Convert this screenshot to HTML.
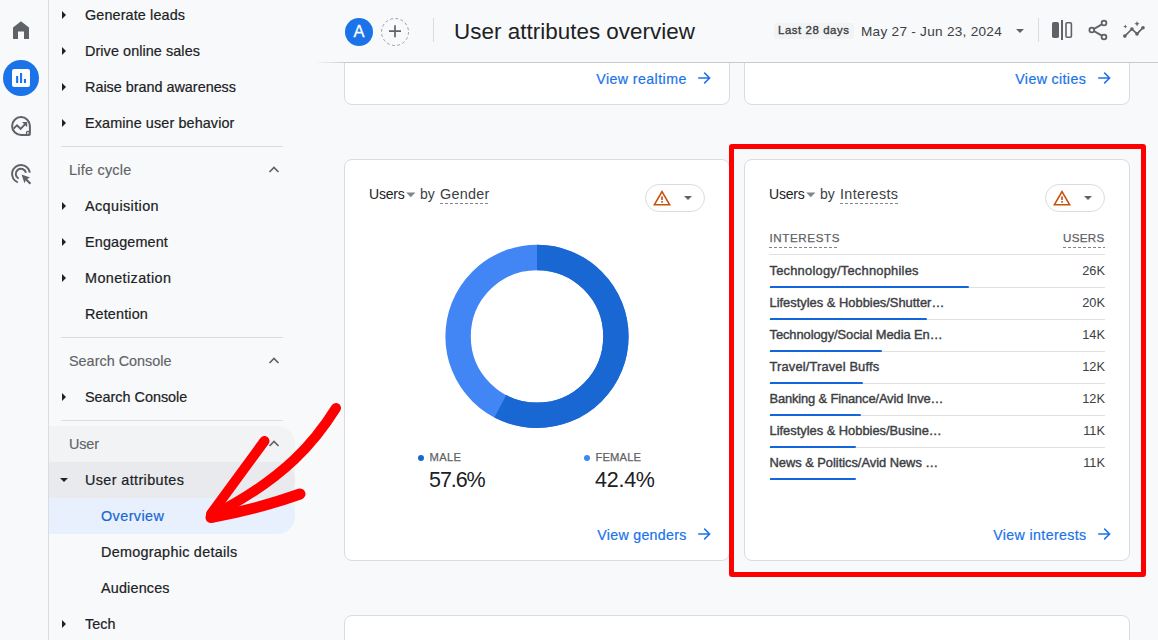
<!DOCTYPE html>
<html lang="en">
<head>
<meta charset="utf-8">
<title>User attributes overview</title>
<style>
*{box-sizing:border-box;margin:0;padding:0}
html,body{width:1158px;height:640px;overflow:hidden;background:#f8f9fa;font-family:"Liberation Sans",sans-serif;color:#202124}
#app{position:relative;width:1158px;height:640px;overflow:hidden;background:#f8f9fa}
.abs{position:absolute}
.t{position:absolute;white-space:nowrap;line-height:1}
/* rail */
#rail{position:absolute;left:0;top:0;width:49px;height:640px;background:#f8f9fa;border-right:1px solid #dadce0}
/* nav */
.nav{font-size:14.4px;color:#202124;height:20px;line-height:20px;-webkit-text-stroke:0.2px}
.sec{font-size:14.4px;color:#5f6368;height:20px;line-height:20px;-webkit-text-stroke:0.15px}
.tri{position:absolute;width:0;height:0;border-top:4px solid transparent;border-bottom:4px solid transparent;border-left:4px solid #202124}
.trid{position:absolute;width:0;height:0;border-left:4px solid transparent;border-right:4px solid transparent;border-top:4px solid #202124}
.hr{position:absolute;height:1px;background:#dadce0;left:61px;width:222px}
/* cards */
.card{position:absolute;background:#fff;border:1px solid #dadce0;border-radius:8px}
.link{font-size:14.2px;color:#1a73e8;-webkit-text-stroke:0.2px #1a73e8}
.row{position:absolute;left:769px;width:336px;height:1px;background:#e0e0e0}
.bar{position:absolute;left:770px;height:2px;background:#1366e0;border-radius:0 1px 1px 0}
.rl{font-size:12.9px;color:#3c4043;-webkit-text-stroke:0.4px #3c4043;left:769.5px;margin-top:0.6px}
.rv{font-size:12.8px;color:#3c4043;right:53px;text-align:right;margin-top:0.6px}
</style>
</head>
<body>
<div id="app">

<!-- sidebar -->
<div class="abs" style="left:49px;top:426px;width:246px;height:108px;background:#f1f3f4;border-radius:0 18px 18px 0"></div>
<div class="abs" style="left:49px;top:462px;width:246px;height:36px;background:#e8eaed;border-radius:0 18px 18px 0"></div>
<div class="abs" style="left:49px;top:498px;width:246px;height:36px;background:#e8f0fe;border-radius:0 18px 18px 0"></div>
<div class="t nav" id="n0" style="left:85px;top:5px;letter-spacing:0.121px">Generate leads</div>
<div class="tri" style="left:62px;top:11px"></div>
<div class="t nav" id="n1" style="left:85px;top:41px;letter-spacing:0.078px">Drive online sales</div>
<div class="tri" style="left:62px;top:47px"></div>
<div class="t nav" id="n2" style="left:85px;top:77px;letter-spacing:-0.009px">Raise brand awareness</div>
<div class="tri" style="left:62px;top:83px"></div>
<div class="t nav" id="n3" style="left:85px;top:113px;letter-spacing:0.110px">Examine user behavior</div>
<div class="tri" style="left:62px;top:119px"></div>
<div class="t sec" id="n4" style="left:69px;top:160px;letter-spacing:0.250px">Life cycle</div>
<svg class="abs" style="left:267px;top:165px" width="14" height="9" viewBox="0 0 14 9"><path d="M2.5 7 L7 2.5 L11.5 7" fill="none" stroke="#5f6368" stroke-width="1.7"/></svg>
<div class="t nav" id="n5" style="left:85px;top:196px;letter-spacing:0.401px">Acquisition</div>
<div class="tri" style="left:62px;top:202px"></div>
<div class="t nav" id="n6" style="left:85px;top:232px;letter-spacing:0.139px">Engagement</div>
<div class="tri" style="left:62px;top:238px"></div>
<div class="t nav" id="n7" style="left:85px;top:268px;letter-spacing:0.399px">Monetization</div>
<div class="tri" style="left:62px;top:274px"></div>
<div class="t nav" id="n8" style="left:85px;top:304px;letter-spacing:0.155px">Retention</div>
<div class="t sec" id="n9" style="left:69px;top:351px;letter-spacing:0.007px">Search Console</div>
<svg class="abs" style="left:267px;top:356px" width="14" height="9" viewBox="0 0 14 9"><path d="M2.5 7 L7 2.5 L11.5 7" fill="none" stroke="#5f6368" stroke-width="1.7"/></svg>
<div class="t nav" id="n10" style="left:85px;top:387px;letter-spacing:-0.008px">Search Console</div>
<div class="tri" style="left:62px;top:393px"></div>
<div class="t sec" id="n11" style="left:69px;top:434px;letter-spacing:-0.148px">User</div>
<svg class="abs" style="left:267px;top:439px" width="14" height="9" viewBox="0 0 14 9"><path d="M2.5 7 L7 2.5 L11.5 7" fill="none" stroke="#5f6368" stroke-width="1.7"/></svg>
<div class="t nav" id="n12" style="left:85px;top:470px;letter-spacing:0.381px">User attributes</div>
<div class="trid" style="left:60px;top:478px"></div>
<div class="t nav" id="n13" style="left:101px;top:506px;color:#1967d2;letter-spacing:0.414px">Overview</div>
<div class="t nav" id="n14" style="left:101px;top:542px;letter-spacing:0.274px">Demographic details</div>
<div class="t nav" id="n15" style="left:101px;top:578px;letter-spacing:0.165px">Audiences</div>
<div class="t nav" id="n16" style="left:85px;top:614px;letter-spacing:0.023px">Tech</div>
<div class="tri" style="left:62px;top:620px"></div>
<div class="hr" style="top:146px"></div>
<div class="hr" style="top:337px"></div>
<div class="hr" style="top:420px"></div>
<div id="rail"></div>
<!-- rail icons -->
<svg class="abs" style="left:0;top:0" width="48" height="200" viewBox="0 0 48 200"><path d="M13 39 V27.4 L21 21.2 L29 27.4 V39 H24 V31.5 H18 V39 Z" fill="#5f6368"/><circle cx="21" cy="78" r="18" fill="#1a73e8"/><rect x="12" y="69" width="18" height="18" rx="2.2" fill="#fff"/><rect x="16.1" y="76" width="2.1" height="7" fill="#1a73e8"/><rect x="20" y="73" width="2.1" height="10" fill="#1a73e8"/><rect x="23.9" y="79" width="2.1" height="4" fill="#1a73e8"/><path d="M21 117.1 a8.9 8.9 0 1 0 0 17.8 h7.9 a1 1 0 0 0 1 -1 v-7.9 a8.9 8.9 0 0 0 -8.9 -8.9 z" fill="none" stroke="#5f6368" stroke-width="2"/><circle cx="27.9" cy="132.9" r="1.5" fill="#f8f9fa" stroke="#5f6368" stroke-width="1.3"/><path d="M13.6 128.6 L17 125.4 L20.6 128.8 L25.4 123.8" fill="none" stroke="#5f6368" stroke-width="1.9"/><path d="M22 122 H27.2 V127.2 Z" fill="#5f6368"/><path d="M17.8 182.4 A9 9 0 1 1 29.9 172.6" fill="none" stroke="#5f6368" stroke-width="2"/><path d="M18.6 178.6 A5.2 5.2 0 1 1 26 172.8" fill="none" stroke="#5f6368" stroke-width="2"/><path d="M21.6 174.4 L30 177.4 L27.2 178.9 L31.2 182.9 L29.7 184.4 L25.7 180.4 L24.4 183.2 Z" fill="#5f6368"/></svg>

<!-- main cards -->
<div class="card" style="left:344px;top:40px;width:386px;height:65px"></div>
<div class="card" style="left:744px;top:40px;width:386px;height:65px"></div>
<div class="card" style="left:344px;top:159px;width:386px;height:402px"></div>
<div class="card" style="left:744px;top:159px;width:386px;height:402px"></div>
<div class="card" style="left:344px;top:615px;width:786px;height:60px"></div>

<div class="t link" id="l1" style="left:596.3px;top:72px;letter-spacing:0.423px">View realtime</div>
<div class="t link" id="l2" style="left:1015.3px;top:72px;letter-spacing:0.367px">View cities</div>
<div class="t link" id="l3" style="left:597.2px;top:528px;letter-spacing:0.315px">View genders</div>
<div class="t link" id="l4" style="left:993.2px;top:528px;letter-spacing:0.381px">View interests</div>

<!-- card contents -->
<div class="t" id="gu" style="left:369px;top:187.3px;font-size:14px;color:#202124;letter-spacing:-0.212px">Users</div>
<svg class="abs" style="left:406.2px;top:191.6px" width="10" height="6" viewBox="0 0 10 6"><path d="M0.2 0.4 H9.4 L4.8 5.2 Z" fill="#80868b"/></svg>
<div class="t" id="gb" style="left:420px;top:187.3px;font-size:14px;color:#3c4043;letter-spacing:-0.048px">by</div>
<div class="t" id="gg" style="left:440px;top:187.3px;font-size:14.4px;color:#3c4043;height:17px;letter-spacing:0.283px">Gender</div>
<div class="abs" style="left:645px;top:184px;width:60px;height:28px;border:1px solid #dadce0;border-radius:14px;background:#fff"></div>
<svg class="abs" style="left:652px;top:189px" width="20" height="18" viewBox="0 0 20 18"><path d="M10 2.6 L17.6 15.7 H2.4 Z" fill="none" stroke="#c5500b" stroke-width="1.6" stroke-linejoin="miter"/><rect x="9.2" y="7.4" width="1.6" height="3.6" fill="#c5500b"/><rect x="9.2" y="12" width="1.6" height="1.7" fill="#c5500b"/></svg>
<div class="abs" style="left:684px;top:196px;width:0;height:0;border-left:4px solid transparent;border-right:4px solid transparent;border-top:4px solid #5f6368"></div>
<div class="t" id="iu" style="left:769px;top:187.3px;font-size:14px;color:#202124;letter-spacing:-0.212px">Users</div>
<svg class="abs" style="left:806.2px;top:191.6px" width="10" height="6" viewBox="0 0 10 6"><path d="M0.2 0.4 H9.4 L4.8 5.2 Z" fill="#80868b"/></svg>
<div class="t" id="ib" style="left:820px;top:187.3px;font-size:14px;color:#3c4043;letter-spacing:-0.048px">by</div>
<div class="t" id="ig" style="left:840px;top:187.3px;font-size:14.4px;color:#3c4043;height:17px;letter-spacing:0.355px">Interests</div>
<div class="abs" style="left:1045px;top:184px;width:60px;height:28px;border:1px solid #dadce0;border-radius:14px;background:#fff"></div>
<svg class="abs" style="left:1052px;top:189px" width="20" height="18" viewBox="0 0 20 18"><path d="M10 2.6 L17.6 15.7 H2.4 Z" fill="none" stroke="#c5500b" stroke-width="1.6" stroke-linejoin="miter"/><rect x="9.2" y="7.4" width="1.6" height="3.6" fill="#c5500b"/><rect x="9.2" y="12" width="1.6" height="1.7" fill="#c5500b"/></svg>
<div class="abs" style="left:1084px;top:196px;width:0;height:0;border-left:4px solid transparent;border-right:4px solid transparent;border-top:4px solid #5f6368"></div>
<svg class="abs" style="left:437px;top:236px" width="200" height="200" viewBox="437 236 200 200"><circle cx="537" cy="336.4" r="78.9" fill="none" stroke="#4285f4" stroke-width="25.39999999999999"/><circle cx="537" cy="336.4" r="78.9" fill="none" stroke="#1967d2" stroke-width="25.39999999999999" stroke-dasharray="285.55 495.74" transform="rotate(-90 537 336.4)"/></svg>
<div class="abs" style="left:418px;top:455px;width:6px;height:6px;border-radius:50%;background:#1967d2"></div>
<div class="t" id="lm" style="left:429.5px;top:452px;font-size:11.2px;color:#5f6368;-webkit-text-stroke:0.25px #5f6368;letter-spacing:0.358px">MALE</div>
<div class="t" id="lmv" style="left:429px;top:470px;font-size:21.5px;color:#202124;letter-spacing:-1.074px">57.6%</div>
<div class="abs" style="left:584px;top:455px;width:6px;height:6px;border-radius:50%;background:#4285f4"></div>
<div class="t" id="lf" style="left:595.5px;top:452px;font-size:11.2px;color:#5f6368;-webkit-text-stroke:0.25px #5f6368;letter-spacing:0.156px">FEMALE</div>
<div class="t" id="lfv" style="left:595px;top:470px;font-size:21.5px;color:#202124;letter-spacing:-0.254px">42.4%</div>
<div class="t" id="th1" style="left:769.5px;top:232px;font-size:11.6px;color:#5f6368;-webkit-text-stroke:0.25px #5f6368;height:16px;letter-spacing:0.604px">INTERESTS</div>
<div class="t" id="th2" style="left:1063px;top:232px;font-size:11.6px;color:#5f6368;-webkit-text-stroke:0.25px #5f6368;height:16px;letter-spacing:0.309px">USERS</div>
<div class="row" style="top:254px"></div>
<div class="t rl" id="r0" style="top:264px;letter-spacing:0.224px">Technology/Technophiles</div>
<div class="t rv" id="v0" style="top:264px">26K</div>
<div class="row" style="top:287px"></div>
<div class="bar" style="top:286px;width:199px"></div>
<div class="t rl" id="r1" style="top:296px;letter-spacing:-0.001px">Lifestyles &amp; Hobbies/Shutter…</div>
<div class="t rv" id="v1" style="top:296px">20K</div>
<div class="row" style="top:319px"></div>
<div class="bar" style="top:318px;width:157px"></div>
<div class="t rl" id="r2" style="top:328px;letter-spacing:-0.068px">Technology/Social Media En…</div>
<div class="t rv" id="v2" style="top:328px">14K</div>
<div class="row" style="top:351px"></div>
<div class="bar" style="top:350px;width:112px"></div>
<div class="t rl" id="r3" style="top:360px;letter-spacing:0.146px">Travel/Travel Buffs</div>
<div class="t rv" id="v3" style="top:360px">12K</div>
<div class="row" style="top:383px"></div>
<div class="bar" style="top:382px;width:93px"></div>
<div class="t rl" id="r4" style="top:392px;letter-spacing:-0.133px">Banking &amp; Finance/Avid Inve…</div>
<div class="t rv" id="v4" style="top:392px">12K</div>
<div class="row" style="top:415px"></div>
<div class="bar" style="top:414px;width:91px"></div>
<div class="t rl" id="r5" style="top:424px;letter-spacing:-0.016px">Lifestyles &amp; Hobbies/Busine…</div>
<div class="t rv" id="v5" style="top:424px">11K</div>
<div class="row" style="top:447px"></div>
<div class="bar" style="top:446px;width:86px"></div>
<div class="t rl" id="r6" style="top:456px;letter-spacing:-0.030px">News &amp; Politics/Avid News …</div>
<div class="t rv" id="v6" style="top:456px">11K</div>
<div class="bar" style="top:478px;width:86px"></div>
<svg class="abs" style="left:696.5px;top:71px" width="14" height="14" viewBox="0 0 14 14"><path d="M1.2 7 H12.2 M7.2 1.6 L12.6 7 L7.2 12.4" fill="none" stroke="#1a73e8" stroke-width="1.5"/></svg>
<svg class="abs" style="left:1096.5px;top:71px" width="14" height="14" viewBox="0 0 14 14"><path d="M1.2 7 H12.2 M7.2 1.6 L12.6 7 L7.2 12.4" fill="none" stroke="#1a73e8" stroke-width="1.5"/></svg>
<svg class="abs" style="left:696.5px;top:527px" width="14" height="14" viewBox="0 0 14 14"><path d="M1.2 7 H12.2 M7.2 1.6 L12.6 7 L7.2 12.4" fill="none" stroke="#1a73e8" stroke-width="1.5"/></svg>
<svg class="abs" style="left:1096.5px;top:527px" width="14" height="14" viewBox="0 0 14 14"><path d="M1.2 7 H12.2 M7.2 1.6 L12.6 7 L7.2 12.4" fill="none" stroke="#1a73e8" stroke-width="1.5"/></svg>

<div class="abs" style="left:440px;top:203px;width:50px;height:1px;background:repeating-linear-gradient(90deg,#80868b 0,#80868b 3px,transparent 3px,transparent 5px)"></div>
<div class="abs" style="left:840px;top:203px;width:59px;height:1px;background:repeating-linear-gradient(90deg,#80868b 0,#80868b 3px,transparent 3px,transparent 5px)"></div>
<div class="abs" style="left:769px;top:247px;width:70px;height:1px;background:repeating-linear-gradient(90deg,#80868b 0,#80868b 3px,transparent 3px,transparent 5px)"></div>
<div class="abs" style="left:1063px;top:247px;width:42px;height:1px;background:repeating-linear-gradient(90deg,#80868b 0,#80868b 3px,transparent 3px,transparent 5px)"></div>

<!-- header -->
<div class="abs" id="hdr" style="left:320px;top:0;width:838px;height:62px;background:#f8f9fa"></div>
<div class="abs" style="left:314px;top:62px;width:844px;height:1px;background:linear-gradient(to right,rgba(200,202,206,0) 0,rgba(200,202,206,1) 32px)"></div>
<div class="abs" style="left:345px;top:18px;width:28px;height:28px;border-radius:50%;background:#1a73e8"></div>
<div class="t" style="left:353.4px;top:23.2px;font-size:16.4px;color:#fff;-webkit-text-stroke:0.3px #fff" id="avA">A</div>
<svg class="abs" style="left:380px;top:17px" width="30" height="30" viewBox="0 0 30 30"><circle cx="15" cy="15" r="13.5" fill="none" stroke="#9aa0a6" stroke-width="1" stroke-dasharray="2.9 2.4"/><path d="M9 14.2 H21 M15 8.2 V20.2" stroke="#5f6368" stroke-width="1.7" fill="none"/></svg>
<div class="abs" style="left:433px;top:18px;width:1px;height:24px;background:#dadce0"></div>
<div class="t" id="title" style="left:454px;top:20.7px;font-size:22.4px;color:#202124;letter-spacing:0.035px">User attributes overview</div>
<div class="abs" style="left:774px;top:23px;width:80px;height:16px;background:#f1f3f4;border-radius:2px"></div>
<div class="t" id="l28" style="left:778px;top:25px;font-size:11.4px;color:#3c4043;-webkit-text-stroke:0.35px #3c4043;letter-spacing:0.576px">Last 28 days</div>
<div class="t" id="dr" style="left:861px;top:24.6px;font-size:13.6px;color:#3c4043;letter-spacing:0.272px">May 27 - Jun 23, 2024</div>
<div class="abs" style="left:1016px;top:29px;width:0;height:0;border-left:4px solid transparent;border-right:4px solid transparent;border-top:4px solid #5f6368"></div>
<div class="abs" style="left:1038px;top:18px;width:1px;height:24px;background:#dadce0"></div>

<!-- header icons -->
<svg class="abs" style="left:1048px;top:16px" width="28" height="28" viewBox="1048 16 28 28"><rect x="1052" y="22" width="7" height="16" rx="1.8" fill="#5f6368"/><rect x="1061" y="20" width="2" height="20" fill="#5f6368"/><rect x="1066" y="22.8" width="5.4" height="14.4" rx="1" fill="none" stroke="#5f6368" stroke-width="1.6"/></svg>
<svg class="abs" style="left:1086px;top:16px" width="26" height="28" viewBox="1086 16 26 28"><path d="M1103.5 23.4 L1092.2 30 L1103.5 36.6" fill="none" stroke="#5f6368" stroke-width="1.9"/><circle cx="1104" cy="23" r="2.4" fill="#f8f9fa" stroke="#5f6368" stroke-width="1.8"/><circle cx="1091.8" cy="30" r="2.4" fill="#f8f9fa" stroke="#5f6368" stroke-width="1.8"/><circle cx="1104" cy="37" r="2.4" fill="#f8f9fa" stroke="#5f6368" stroke-width="1.8"/></svg>
<svg class="abs" style="left:1120px;top:16px" width="30" height="28" viewBox="1120 16 30 28"><path d="M1124.8 36.1 L1131.9 29 L1137 33.9 L1143 27.7" fill="none" stroke="#5f6368" stroke-width="1.7" stroke-linejoin="round"/><circle cx="1124.8" cy="36.1" r="1.8" fill="#5f6368"/><circle cx="1131.9" cy="29" r="1.8" fill="#5f6368"/><circle cx="1137" cy="33.9" r="1.8" fill="#5f6368"/><circle cx="1143" cy="27.7" r="1.8" fill="#5f6368"/><path d="M1137 21 l0.8 1.9 l1.9 0.8 l-1.9 0.8 l-0.8 1.9 l-0.8 -1.9 l-1.9 -0.8 l1.9 -0.8 z" fill="#5f6368"/><path d="M1125.3 24.6 l0.6 1.4 l1.4 0.6 l-1.4 0.6 l-0.6 1.4 l-0.6 -1.4 l-1.4 -0.6 l1.4 -0.6 z" fill="#5f6368"/></svg>

<!-- annotations -->
<div class="abs" style="left:729px;top:144px;width:417px;height:433px;border:5.7px solid #ff0000;border-radius:3px"></div>
<svg class="abs" style="left:190px;top:390px" width="170" height="150" viewBox="190 390 170 150"><g fill="none" stroke="#ff0000" stroke-linecap="round" stroke-linejoin="round"><path d="M336 408 C316 440 286 478 211 516" stroke-width="10"/><path d="M264.5 441 L211 514" stroke-width="10"/><path d="M300 494 Q258 509 211 517.5" stroke-width="11"/></g></svg>

</div>
</body>
</html>
